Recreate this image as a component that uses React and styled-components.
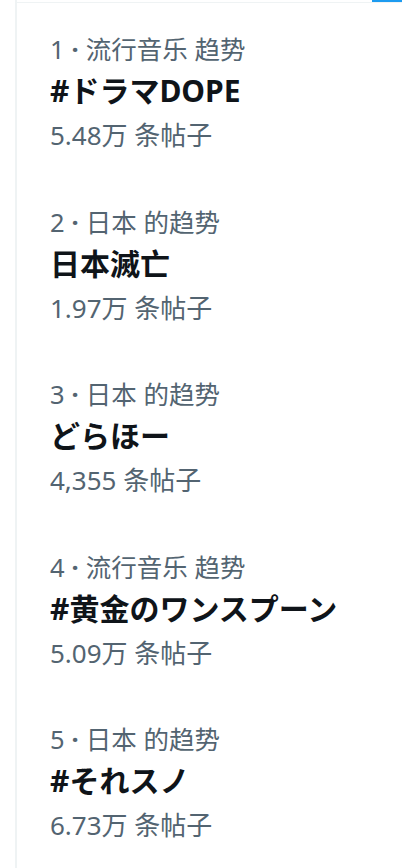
import React from "react";
import styled, { createGlobalStyle } from "styled-components";

const GlobalStyle = createGlobalStyle`
  html, body {
    margin: 0;
    padding: 0;
    background: #ffffff;
  }
  body {
    font-family: "Noto Sans", "Noto Sans CJK SC", sans-serif;
    -webkit-font-smoothing: antialiased;
  }
`;

const trends = [
  { rank: 1, context: "流行音乐 趋势", name: "#ドラマDOPE", posts: "5.48万 条帖子" },
  { rank: 2, context: "日本 的趋势", name: "日本滅亡", posts: "1.97万 条帖子" },
  { rank: 3, context: "日本 的趋势", name: "どらほー", posts: "4,355 条帖子" },
  { rank: 4, context: "流行音乐 趋势", name: "#黄金のワンスプーン", posts: "5.09万 条帖子" },
  { rank: 5, context: "日本 的趋势", name: "#それスノ", posts: "6.73万 条帖子" },
];

const Page = styled.div`
  width: 402px;
  height: 868px;
  overflow: hidden;
  display: flex;
  flex-direction: column;
`;

const TopStrip = styled.div`
  display: flex;
  justify-content: flex-end;
  height: 2px;
`;

const BlueEdge = styled.div`
  width: 30px;
  height: 2px;
  background: #1d9bf0;
`;

const Panel = styled.section`
  flex: 1;
  margin-left: 15px;
  border-left: 2px solid #eff3f4;
  margin-top: -2px;
  padding-top: 2px;
`;

const List = styled.div`
  border-top: 1px solid #eff3f4;
  display: flex;
  flex-direction: column;
`;

const Trend = styled.div`
  padding: 30px 20px 20px 33px;
  display: flex;
  flex-direction: column;
  height: 172.5px;
  box-sizing: border-box;
`;

const Meta = styled.div`
  font-size: 25.5px;
  line-height: 32px;
  color: #536471;
  white-space: nowrap;
`;

const Dot = styled.span`
  display: inline-block;
  margin: 0 7px;
  font-weight: 700;
`;

const Name = styled.div`
  margin-top: 6px;
  font-size: 30px;
  line-height: 40px;
  font-weight: 700;
  color: #0f1419;
  white-space: nowrap;
`;

const Count = styled.div`
  margin-top: 8px;
  font-size: 26px;
  line-height: 32px;
  color: #536471;
  white-space: nowrap;
`;

export default function App() {
  return (
    <>
      <GlobalStyle />
      <Page>
        <TopStrip>
          <BlueEdge />
        </TopStrip>
        <Panel>
          <List>
            {trends.map((t) => (
              <Trend key={t.rank}>
                <Meta>
                  {t.rank}
                  <Dot>·</Dot>
                  {t.context}
                </Meta>
                <Name>{t.name}</Name>
                <Count>{t.posts}</Count>
              </Trend>
            ))}
          </List>
        </Panel>
      </Page>
    </>
  );
}
